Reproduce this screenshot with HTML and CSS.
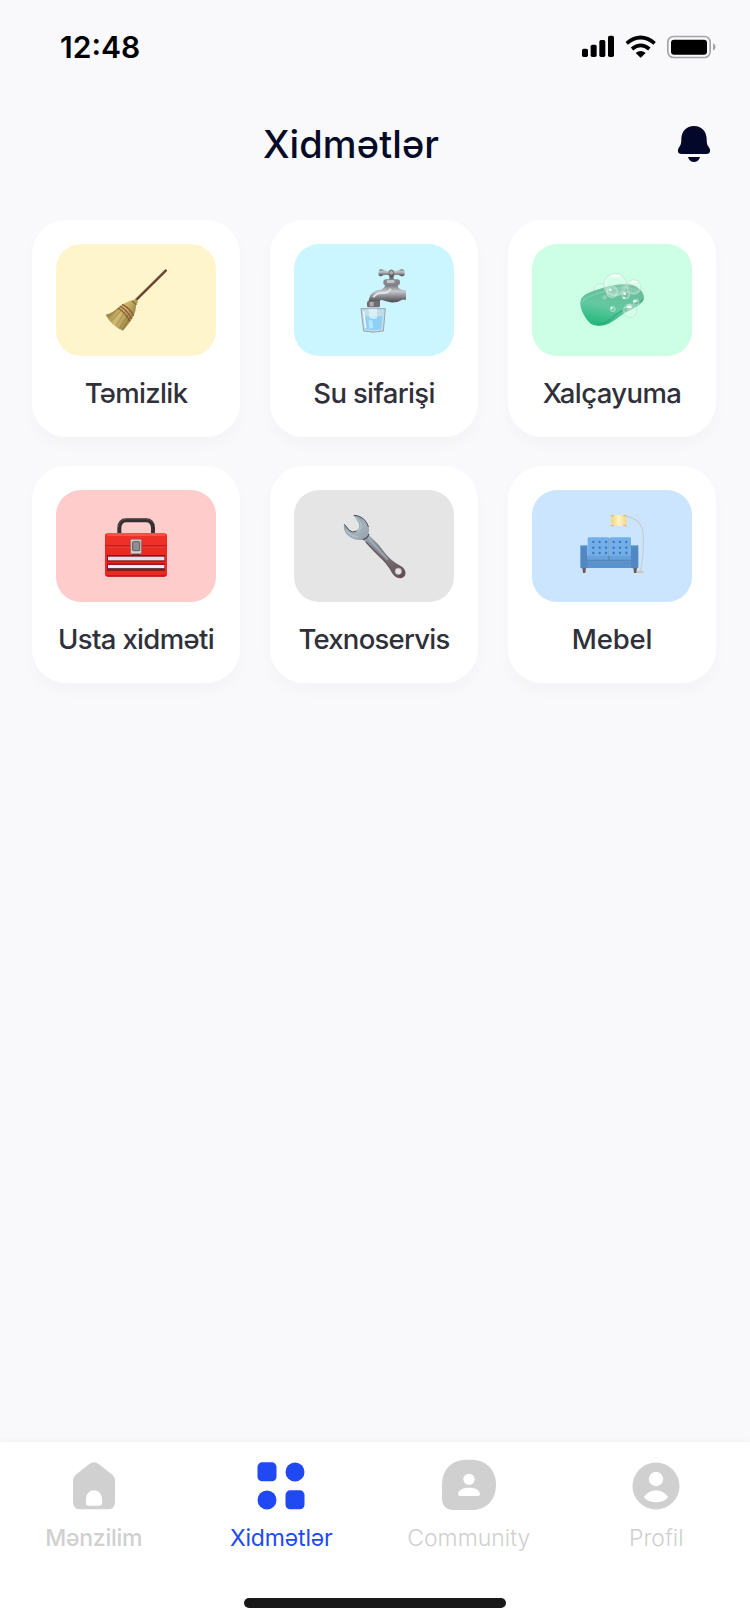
FILE: index.html
```html
<!DOCTYPE html>
<html lang="az">
<head>
    <meta charset="UTF-8">
    <meta name="viewport" content="width=device-width, initial-scale=1.0">
    <title>Xidmətlər</title>
    <link rel="stylesheet" href="styles.css">
</head>
<body>
    <div class="status-bar">
        <span class="time">12:48</span>
        <svg class="status-icons" viewBox="0 0 402 72">
            <rect x="0" y="41" width="18" height="25" rx="5"/>
            <rect x="26" y="29" width="18" height="37" rx="5"/>
            <rect x="52" y="15" width="18" height="51" rx="5"/>
            <rect x="78" y="2" width="18" height="64" rx="5"/>
            <g fill="none" stroke="#000" stroke-width="11">
                <path d="M134 25 Q176 -10 218 25"/>
                <path d="M150 42 Q176 20 202 42"/>
            </g>
            <path d="M161 54 Q176 42 191 54 L178 67 Q176 69 174 67 Z"/>
            <rect x="257.500" y="4.500" width="127" height="63" rx="17" fill="none" stroke="#a5a5a7" stroke-width="5"/>
            <rect x="267" y="14" width="108" height="45" rx="9"/>
            <path d="M393 25 Q401 29 401 36 Q401 43 393 47 Z" fill="#a5a5a7"/>
        </svg>
    </div>

    <header class="header">
        <h1>Xidmətlər</h1>
        <svg class="bell" viewBox="0 0 96 108">
            <path d="M48 0 C24 0 11 17 10 38 C10 54 8 57 2 66 C-3 75 1 84 10 84 H86 C95 84 99 75 94 66 C88 57 86 54 86 38 C85 17 72 0 48 0 Z"/>
            <path d="M30 93 H66 C63 103 57 108 48 108 C39 108 33 103 30 93 Z"/>
        </svg>
    </header>

    <main class="services">
        <div class="card">
            <div class="thumb yellow">
                <svg viewBox="0 0 192 192">
                    <defs>
                        <linearGradient id="straw" x1="0" y1="0.200" x2="1" y2="0.800">
                            <stop offset="0" stop-color="#7d6a30"/>
                            <stop offset="0.450" stop-color="#d0ba70"/>
                            <stop offset="1" stop-color="#786229"/>
                        </linearGradient>
                    </defs>
                    <path d="M185 8 L95 97" stroke="#66432f" stroke-width="8" stroke-linecap="round"/>
                    <path d="M182 8 L93 95" stroke="#9a7350" stroke-width="2"/>
                    <path d="M86 97 L96 93 L102 101 L96 112 C98 133 79 164 57 188 Q22 174 5 140 C37 133 52 103 86 97 Z" fill="url(#straw)"/>
                    <g stroke="#6d5722" stroke-width="1.500" fill="none" opacity="0.700">
                        <path d="M50 116 L14 146"/>
                        <path d="M56 122 L24 158"/>
                        <path d="M64 130 L36 172"/>
                        <path d="M72 140 L47 181"/>
                        <path d="M78 148 L56 184"/>
                    </g>
                    <path d="M54 109 Q77 119 89 144 M47 114 Q69 126 84 153 M41 120 Q63 132 78 160" stroke="#8e5635" stroke-width="4" fill="none"/>
                    <path d="M84 98 L97 111" stroke="#8b683c" stroke-width="4"/>
                </svg>
            </div>
            <p class="label temizlik">Təmizlik</p>
        </div>

        <div class="card">
            <div class="thumb cyan">
                <svg viewBox="0 0 192 192">
                    <defs>
                        <linearGradient id="metal" x1="0" y1="0" x2="0" y2="1">
                            <stop offset="0" stop-color="#6f7378"/>
                            <stop offset="0.350" stop-color="#c5c8cc"/>
                            <stop offset="0.700" stop-color="#77797e"/>
                            <stop offset="1" stop-color="#413f42"/>
                        </linearGradient>
                    </defs>
                    <rect x="142" y="20" width="13" height="19" fill="#6b6f75"/>
                    <path d="M111 7 Q112 2 120 4 Q126 10 139 9 Q148 0 158 9 Q170 10 177 4 Q186 2 188 10 V20 Q184 27 176 24 Q169 19 158 21 Q149 31 139 21 Q127 19 119 24 Q110 27 109 18 Z" fill="url(#metal)"/>
                    <circle cx="148" cy="14" r="7" fill="#a8abb0" stroke="#5b5c60" stroke-width="2"/>
                    <path d="M130 50 H168 V58 Q176 68 192 67 V95 H181 Q165 105 145 103 Q127 99 118 95 Q112 96 113 107 H79 Q80 74 106 66 Q128 65 130 50 Z" fill="url(#metal)"/>
                    <path d="M94 88 Q102 74 121 75 Q140 76 146 62" stroke="#e0e4e9" stroke-width="6" fill="none"/>
                    <rect x="124" y="34" width="50" height="18" rx="8" fill="#85878c"/>
                    <rect x="134" y="36" width="24" height="9" rx="4" fill="#c4c5c7"/>
                    <rect x="75" y="99" width="39" height="19" rx="5" fill="#706c70"/>
                    <rect x="83" y="102" width="12" height="13" fill="#a9acb1"/>
                    <path d="M57 122 H130 L124 189 Q93 196 65 189 Z" fill="#c2dce8" stroke="#94a5af" stroke-width="3"/>
                    <path d="M66 143 Q94 148 121 143 L118 184 Q94 189 71 184 Z" fill="#8fd1f6"/>
                    <path d="M79 122 H105 V150 Q94 157 82 149 Z" fill="#e4f6fe" opacity="0.700"/>
                    <path d="M85 157 L88 181" stroke="#b6e5fc" stroke-width="12"/>
                    <path d="M65 130 L71 180" stroke="#f1fafe" stroke-width="4"/>
                </svg>
            </div>
            <p class="label su">Su sifarişi</p>
        </div>

        <div class="card">
            <div class="thumb green">
                <svg viewBox="0 0 192 192">
                    <defs>
                        <linearGradient id="soap" x1="0.600" y1="0" x2="0.300" y2="1">
                            <stop offset="0" stop-color="#6dbb9b"/>
                            <stop offset="0.550" stop-color="#62c8a0"/>
                            <stop offset="1" stop-color="#20b87b"/>
                        </linearGradient>
                        <radialGradient id="bubble">
                            <stop offset="0.500" stop-color="#fff" stop-opacity="0.120"/>
                            <stop offset="1" stop-color="#fff" stop-opacity="0.420"/>
                        </radialGradient>
                    </defs>
                    <circle cx="60" cy="64" r="17" fill="url(#bubble)" stroke="#a5d9c2" stroke-width="1.500"/>
                    <path d="M1 106 C1 82 22 75 49 66 C75 57 103 49 132 48 C166 47 191 66 192 88 C193 105 169 117 145 129 C115 143 96 172 60 173 C44 173 34 170 26 161 C13 147 1 124 1 106 Z" fill="url(#soap)"/>
                    <path d="M7 103 C10 89 48 78 72 71 C103 61 146 50 172 70" stroke="#94dfc0" stroke-width="3" fill="none" opacity="0.600"/>
                    <path d="M189 92 C184 108 143 117 112 137 C91 153 76 170 50 170" stroke="#329b72" stroke-width="5" fill="none" opacity="0.500"/>
                    <g fill="url(#bubble)" stroke="#b3dcca" stroke-width="1.800">
                        <circle cx="105" cy="50" r="34"/>
                        <circle cx="161" cy="57" r="22"/>
                        <circle cx="96" cy="71" r="18"/>
                        <circle cx="137" cy="81" r="12"/>
                        <circle cx="150" cy="128" r="20"/>
                        <circle cx="98" cy="123" r="8"/>
                        <circle cx="148" cy="118" r="9"/>
                        <circle cx="168" cy="103" r="9"/>
                        <circle cx="74" cy="88" r="5"/>
                    </g>
                    <g fill="#fff">
                        <ellipse cx="107" cy="23" rx="14" ry="3.500"/>
                        <ellipse cx="163" cy="41" rx="10" ry="3"/>
                        <circle cx="91" cy="65" r="3.500"/>
                        <circle cx="134" cy="77" r="4"/>
                        <ellipse cx="148" cy="117" rx="7" ry="4"/>
                        <ellipse cx="165" cy="100" rx="6" ry="3"/>
                        <circle cx="95" cy="120" r="3"/>
                        <circle cx="132" cy="90" r="3"/>
                    </g>
                </svg>
            </div>
            <p class="label xalca">Xalçayuma</p>
        </div>

        <div class="card">
            <div class="thumb red">
                <svg viewBox="0 0 192 192">
                    <path d="M46 57 L46 42 Q47 19 67 19 H126 Q146 19 147 42 V57" fill="none" stroke="#342f30" stroke-width="12"/>
                    <path d="M43 41 Q45 17 67 15 H126 Q142 16 147 27" fill="none" stroke="#6b5b58" stroke-width="2"/>
                    <rect x="3" y="58" width="186" height="130" rx="8" fill="#e92a22"/>
                    <rect x="8" y="60" width="177" height="7" rx="3" fill="#fb5140"/>
                    <rect x="5" y="69" width="182" height="25" fill="#ef3028"/>
                    <path d="M4 96 H188" stroke="#a60f10" stroke-width="3"/>
                    <path d="M5 99 H187" stroke="#fd5445" stroke-width="2"/>
                    <rect x="9" y="123" width="174" height="20" fill="#8f1112"/>
                    <rect x="12" y="128" width="169" height="11" fill="#dde2f3"/>
                    <rect x="9" y="148" width="174" height="23" fill="#9b1716"/>
                    <rect x="12" y="153" width="169" height="10" fill="#e6ebf7"/>
                    <rect x="12" y="163" width="169" height="6" fill="#4f302f"/>
                    <path d="M7 183 Q8 186 12 186 H181 Q185 186 186 182" fill="none" stroke="#a00f0e" stroke-width="3"/>
                    <rect x="80" y="76" width="32" height="44" rx="3" fill="#d4cecb" stroke="#847372" stroke-width="2"/>
                    <rect x="86" y="83" width="21" height="27" rx="2" fill="#918e92" stroke="#5e5859" stroke-width="3"/>
                    <path d="M84 121 H109" stroke="#5c3534" stroke-width="3"/>
                </svg>
            </div>
            <p class="label usta">Usta xidməti</p>
        </div>

        <div class="card">
            <div class="thumb grey">
                <svg viewBox="0 0 192 192">
                    <defs>
                        <linearGradient id="wrench" x1="0" y1="0" x2="1" y2="1">
                            <stop offset="0" stop-color="#8197a4"/>
                            <stop offset="0.250" stop-color="#a4b1bb"/>
                            <stop offset="0.500" stop-color="#858e98"/>
                            <stop offset="0.750" stop-color="#75686d"/>
                            <stop offset="1" stop-color="#594b50"/>
                        </linearGradient>
                    </defs>
                    <path fill-rule="evenodd" d="M35 3 C59 3 79 21 81 43 Q82 52 79 62 L105 87 C128 112 134 134 175 155 C189 162 197 179 184 190 C171 198 155 187 149 174 C136 148 112 130 88 105 L64 77 C41 81 19 73 8 51 Q3 40 7 30 L22 47 L31 53 L43 51 L51 42 V29 Z M169 162 A10 10 0 1 0 169 182 A10 10 0 1 0 169 162" fill="url(#wrench)"/>
                    <path d="M35 4 C56 4 75 20 79 39 M7 31 L22 49 L32 54 L44 51" fill="none" stroke="#475560" stroke-width="3"/>
                    <path d="M43 11 L57 28 V40 L47 54 M11 48 Q26 67 48 68" fill="none" stroke="#b3bfc7" stroke-width="4"/>
                    <path d="M75 62 Q83 80 100 96 Q120 118 137 137" fill="none" stroke="#b3bdc3" stroke-width="6" opacity="0.600"/>
                    <path d="M62 77 Q76 74 81 60" fill="none" stroke="#4e5660" stroke-width="4"/>
                    <path d="M72 84 L108 121 Q137 147 151 174 Q160 189 174 191" fill="none" stroke="#6a5a62" stroke-width="4"/>
                    <circle cx="169" cy="172" r="10" fill="none" stroke="#a5908f" stroke-width="2"/>
                </svg>
            </div>
            <p class="label texno">Texnoservis</p>
        </div>

        <div class="card">
            <div class="thumb blue">
                <svg viewBox="0 0 192 192">
                    <defs>
                        <linearGradient id="shade">
                            <stop offset="0" stop-color="#f0d285"/>
                            <stop offset="0.500" stop-color="#fff6bb"/>
                            <stop offset="1" stop-color="#f3d588"/>
                        </linearGradient>
                    </defs>
                    <path d="M138 7 C171 12 188 33 190 63 C192 103 188 139 181 172" stroke="#c9cccd" stroke-width="3.500" fill="none"/>
                    <ellipse cx="180" cy="174" rx="12" ry="4" fill="#cbc7bd"/>
                    <rect x="94" y="4" width="45" height="32" rx="3" fill="url(#shade)"/>
                    <path d="M92 5 H140 M92 35 H140" stroke="#dcb66c" stroke-width="3" stroke-dasharray="10 28"/>
                    <path d="M7 160 H18 L16 177 H9 Z M160 160 H171 L169 177 H162 Z" fill="#6b5a54"/>
                    <rect x="23" y="70" width="63" height="58" rx="4" fill="#72aee9"/>
                    <rect x="89" y="70" width="64" height="58" rx="4" fill="#72aee9"/>
                    <g fill="none" stroke="#3d75b5" stroke-width="7" stroke-linecap="round" stroke-dasharray="0 19">
                        <path d="M40 84 H79 M40 101 H79 M40 117 H79"/>
                        <path d="M101 84 H140 M101 101 H140 M101 117 H140"/>
                    </g>
                    <rect x="20" y="125" width="135" height="15" fill="#67a2dc"/>
                    <rect x="18" y="140" width="140" height="22" fill="#5a92cb"/>
                    <path d="M20 139 H155 M87 71 V139" stroke="#3b6c9f" stroke-width="2"/>
                    <rect x="1" y="93" width="21" height="70" rx="4" fill="#5288c1"/>
                    <rect x="153" y="93" width="22" height="70" rx="4" fill="#5288c1"/>
                    <path d="M3 95 H19 M156 95 H172" stroke="#79afe3" stroke-width="4"/>
                </svg>
            </div>
            <p class="label mebel">Mebel</p>
        </div>
    </main>

    <nav class="tab-bar">
        <div class="tabs">
            <a class="tab menzilim">
                <svg viewBox="0 0 168 168">
                    <path d="M69 19 Q84 7 99 19 L137 49 Q147 57 147 69 V131 Q147 154 124 154 H44 Q21 154 21 131 V69 Q21 57 31 49 Z"/>
                    <path class="cut" d="M60 136 V121 A24 24 0 0 1 108 121 V136 Q108 143 101 143 H67 Q60 143 60 136 Z"/>
                </svg>
                <span>Mənzilim</span>
            </a>
            <a class="tab xidmetler active">
                <svg viewBox="0 0 168 168">
                    <rect x="13.500" y="13" width="57" height="57" rx="14"/>
                    <circle cx="126" cy="42" r="28.500"/>
                    <circle cx="42" cy="126" r="28.500"/>
                    <rect x="97.500" y="97" width="57" height="57" rx="14"/>
                </svg>
                <span>Xidmətlər</span>
            </a>
            <a class="tab community">
                <svg viewBox="0 0 168 168">
                    <path d="M3 82 C3 35 30 5 78 5 H90 C136 5 165 36 165 80 C165 126 136 156 90 156 H38 Q3 156 3 121 Z"/>
                    <circle class="cut" cx="84" cy="64" r="17"/>
                    <path class="cut" d="M51 108 C53 95 66 89 84 89 C102 89 115 95 117 108 Q117 114 111 114 H57 Q51 114 51 108 Z"/>
                </svg>
                <span>Community</span>
            </a>
            <a class="tab profil">
                <svg viewBox="0 0 168 168">
                    <circle cx="84" cy="84" r="70.500"/>
                    <circle class="cut" cx="84" cy="63" r="21.500"/>
                    <path class="cut" d="M49 115 Q64 97 84 97 Q104 97 119 115 Q121 118 118 120 Q104 133 84 133 Q64 133 50 120 Q47 118 49 115 Z"/>
                </svg>
                <span>Profil</span>
            </a>
        </div>
        <div class="home-indicator"></div>
    </nav>
</body>
</html>
```
FILE: styles.css
```css
* {
    box-sizing: border-box;
}
body {
    font-family: Inter, "Liberation Sans", sans-serif;
    background-color: #f9f9fc;
    display: flex;
    flex-direction: column;
    width: 750px;
    height: 1624px;
    margin: 0;
    overflow: hidden;
}
h1, p {
    margin: 0;
}
svg {
    display: block;
    overflow: visible;
}
.status-bar {
    display: flex;
    align-items: center;
    justify-content: space-between;
    height: 94px;
    padding: 0 34px 0 60px;
}
.time {
    font-size: 30px;
    font-weight: 600;
}
.status-icons {
    width: 134px;
    height: 24px;
}
.header {
    display: flex;
    align-items: center;
    height: 100px;
    padding: 0 40px 0 24px;
    color: #050a26;
}
.header h1 {
    flex: 1;
    text-align: center;
    font-size: 38px;
    font-weight: 500;
    line-height: 48px;
    letter-spacing: 0.1px;
}
.bell {
    width: 32px;
    height: 36px;
    fill: #03072a;
}
.services {
    display: grid;
    grid-template-columns: repeat(3, 208px);
    gap: 29px 30px;
    padding: 25.5px 32px 0;
}
.card {
    height: 217px;
    padding: 24.5px 24px 0;
    background-color: #fff;
    border-radius: 34px;
    box-shadow: 0 8px 16px rgba(20, 20, 40, 0.025);
}
.thumb {
    display: flex;
    align-items: center;
    justify-content: center;
    height: 112px;
    border-radius: 25px;
}
.thumb svg {
    width: 64px;
    height: 64px;
}
.yellow {
    background-color: #fff5cc;
}
.cyan {
    background-color: #ccf6ff;
}
.green {
    background-color: #ccffe5;
}
.red {
    background-color: #ffcccc;
}
.grey {
    background-color: #e5e5e5;
}
.blue {
    background-color: #cce5ff;
}
.label {
    display: flex;
    justify-content: center;
    margin-top: 18.5px;
    color: #2f303a;
    font-size: 27.5px;
    font-weight: 500;
    line-height: 36px;
    white-space: nowrap;
}
.temizlik, .su, .usta {
    letter-spacing: -0.65px;
}
.xalca {
    letter-spacing: -0.6px;
}
.texno {
    letter-spacing: -0.75px;
}
.mebel {
    letter-spacing: -0.2px;
}
.tab-bar {
    display: flex;
    flex-direction: column;
    align-items: center;
    justify-content: space-between;
    height: 182px;
    margin-top: auto;
    padding: 16px 0;
    background-color: #fff;
    box-shadow: 0 -1px 6px rgba(0, 0, 0, 0.04);
}
.tabs {
    display: grid;
    grid-template-columns: repeat(4, 1fr);
    width: 100%;
}
.tab {
    display: flex;
    flex-direction: column;
    align-items: center;
    gap: 9px;
    color: #d0d0d0;
    font-size: 23px;
    line-height: 30px;
}
.tab svg {
    width: 56px;
    height: 56px;
    fill: currentColor;
}
.tab .cut {
    fill: #fff;
}
.active {
    color: #2049f4;
}
.menzilim {
    font-weight: 500;
    letter-spacing: -0.25px;
}
.xidmetler {
    letter-spacing: -0.15px;
}
.community, .profil {
    font-weight: 300;
}
.home-indicator {
    width: 262px;
    height: 10px;
    border-radius: 5px;
    background-color: #191919;
}
```
